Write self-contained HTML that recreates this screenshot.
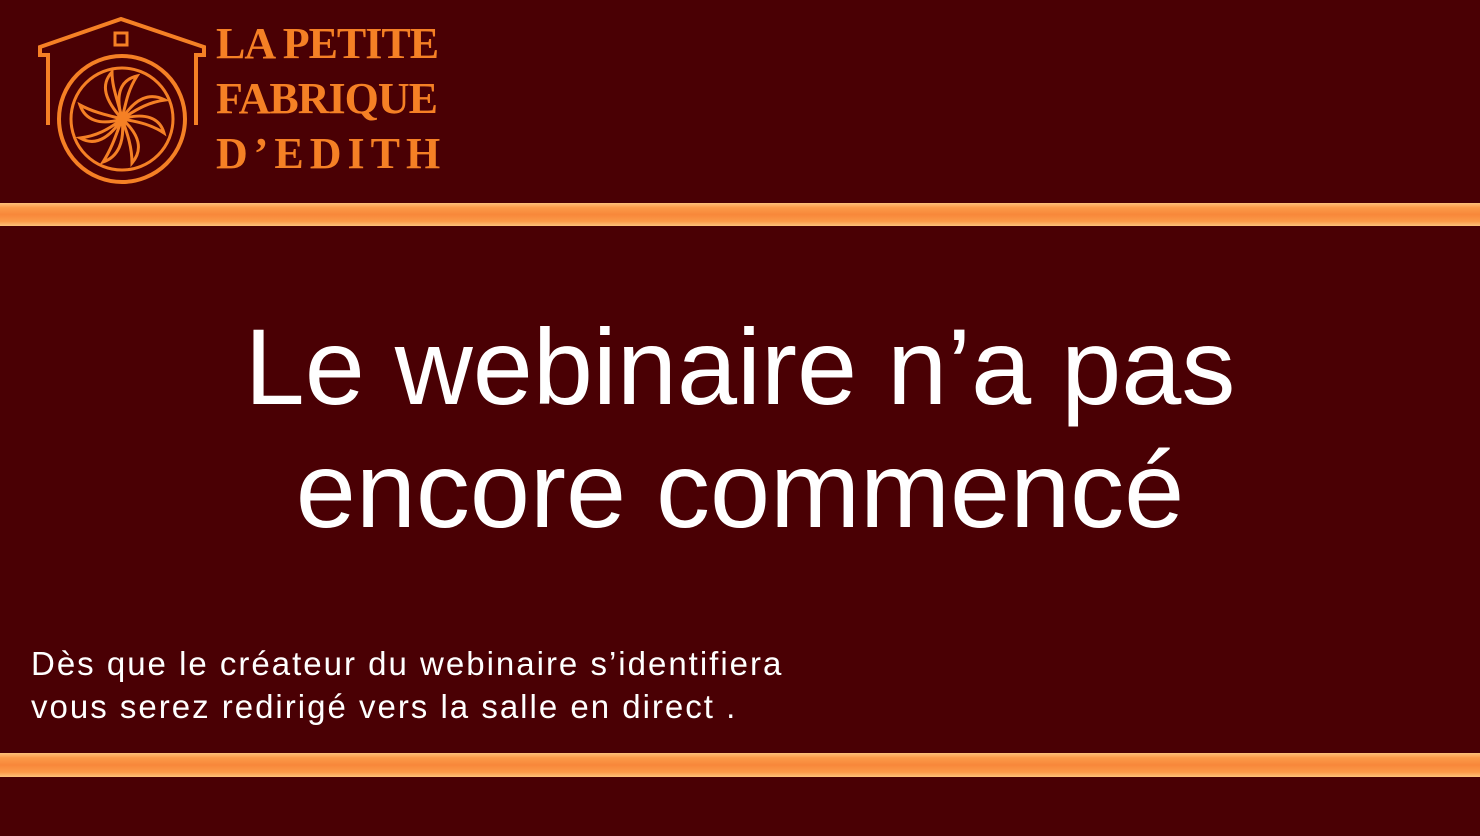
<!DOCTYPE html>
<html><head><meta charset="utf-8"><style>
body{margin:0;width:1480px;height:836px;background:#4a0004;position:relative;overflow:hidden;font-family:"Liberation Sans",sans-serif}
.bar{position:absolute;left:0;width:1480px;background:linear-gradient(#fdc27a 0%,#fb9a48 20%,#f8873a 50%,#fb9a48 80%,#fdc27a 100%)}
.logo{position:absolute;left:216px;font-family:"Liberation Serif",serif;font-weight:bold;color:#f58025;font-size:44px;line-height:44px;white-space:nowrap;letter-spacing:-1px}
.t{position:absolute;left:0;width:1480px;text-align:center;color:#fff;font-size:108px;line-height:108px;white-space:nowrap}
.s{position:absolute;left:31px;color:#fff;font-size:33px;line-height:33px;white-space:nowrap;letter-spacing:2px}
</style></head><body>
<svg style="position:absolute;left:0;top:0" width="220" height="200" viewBox="0 0 220 200">
<g fill="none" stroke="#f58025" stroke-width="4">
<path d="M48 125 V55 H40 V47 L121 19 L204 47 V55 H196 V125"/>
<rect x="115" y="33" width="12" height="12" stroke-width="3"/>
<circle cx="122" cy="119" r="63"/>
<circle cx="122" cy="119" r="51" stroke-width="3"/>
<circle cx="122" cy="119" r="4" stroke-width="3"/>
<g stroke-width="3">
<path d="M122 119 C105 100 100 85 112 72 C112 88 118 100 122 119"/>
<path d="M122 119 C115 95 120 80 137 76 C128 90 126 102 122 119" />
<path d="M122 119 C135 98 150 92 165 100 C150 102 138 108 122 119"/>
<path d="M122 119 C145 112 160 118 164 133 C152 125 140 122 122 119"/>
<path d="M122 119 C140 135 143 150 132 163 C132 148 128 135 122 119"/>
<path d="M122 119 C125 142 118 157 103 162 C112 148 116 135 122 119"/>
<path d="M122 119 C108 140 94 146 80 138 C96 136 108 130 122 119"/>
<path d="M122 119 C100 126 85 120 80 105 C93 112 106 115 122 119"/>
</g></g></svg>
<div class="logo" style="top:22px">LA PETITE</div>
<div class="logo" style="top:77px">FABRIQUE</div>
<div class="logo" style="top:132px;letter-spacing:6px">D’EDITH</div>
<div class="bar" style="top:203px;height:23px"></div>
<div class="bar" style="top:753px;height:24px"></div>
<div class="t" style="top:313px">Le webinaire n’a pas</div>
<div class="t" style="top:436px">encore commencé</div>
<div class="s" style="top:647px">Dès que le créateur du webinaire s’identifiera</div>
<div class="s" style="top:690px">vous serez redirigé vers la salle en direct .</div>
</body></html>
